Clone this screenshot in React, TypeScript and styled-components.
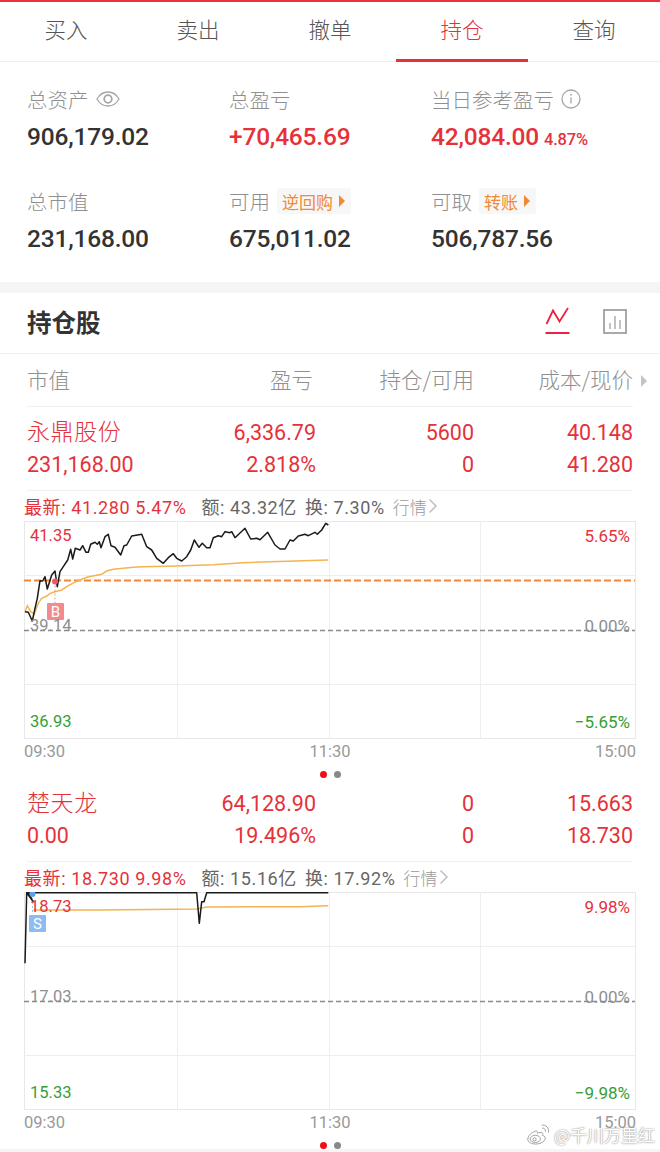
import * as React from "react";
import styled, { createGlobalStyle } from "styled-components";

const RED = "#e5323a";
const NUM_FONT = `Roboto, "Noto Sans CJK SC", sans-serif`;

const GlobalStyle = createGlobalStyle`
  html, body {
    margin: 0;
    padding: 0;
    background: #ffffff;
    overflow: hidden;
    font-family: "Noto Sans CJK SC", "Noto Sans", sans-serif;
  }
`;

const Page = styled.div`
  position: relative;
  width: 660px;
  height: 1152px;
  overflow: hidden;
  background: #ffffff;
  border-top: 2px solid #ee2f3c;
  box-sizing: border-box;
`;

const TabBar = styled.div`
  display: flex;
  height: 60px;
  box-shadow: inset 0 -1px 0 #eeeeee;
`;

const Tab = styled.div<{ $active?: boolean }>`
  flex: 1;
  display: flex;
  align-items: center;
  justify-content: center;
  padding-bottom: 4px;
  box-sizing: border-box;
  font-size: 21.5px;
  font-weight: 300;
  color: ${({ $active }) => ($active ? RED : "#555555")};
  border-bottom: 3px solid ${({ $active }) => ($active ? RED : "transparent")};
`;

const StatsGrid = styled.div`
  display: grid;
  grid-template-columns: 202px 202px 202px;
  grid-auto-rows: 102px;
  padding: 21px 0 0 27px;
  height: 220px;
  box-sizing: border-box;
`;

const Stat = styled.div`
  display: flex;
  flex-direction: column;
`;

const StatLabel = styled.div`
  display: flex;
  align-items: center;
  gap: 7px;
  height: 32px;
  font-size: 20.5px;
  font-weight: 300;
  color: #8f8f8f;
  white-space: nowrap;
`;

const StatValue = styled.div<{ $red?: boolean }>`
  display: flex;
  align-items: baseline;
  gap: 5px;
  margin-top: 7px;
  font-family: ${NUM_FONT};
  font-size: 24.5px;
  line-height: 30px;
  font-weight: 500;
  letter-spacing: -0.2px;
  color: ${({ $red }) => ($red ? RED : "#333333")};
`;

const SmallPct = styled.span`
  font-size: 16.5px;
  letter-spacing: -0.2px;
`;

const Tag = styled.span`
  display: inline-flex;
  align-items: center;
  gap: 6px;
  height: 26px;
  padding: 0 6px 0 5px;
  font-size: 17px;
  font-weight: 400;
  color: #f08a35;
  background: #f7f7f7;
  border-radius: 2px;
`;

const TagArrow = styled.i`
  width: 0;
  height: 0;
  border-left: 6px solid #f08a35;
  border-top: 6px solid transparent;
  border-bottom: 6px solid transparent;
`;

const Band = styled.div`
  height: 11px;
  background: #f5f5f5;
`;

const SectionHeader = styled.div`
  display: flex;
  align-items: center;
  height: 61px;
  padding: 0 33px 3px 27px;
  box-sizing: border-box;
  border-bottom: 1px solid #f0f0f0;
`;

const SectionTitle = styled.div`
  flex: 1;
  font-size: 24.5px;
  font-weight: 700;
  color: #333333;
`;

const HeaderIcons = styled.div`
  display: flex;
  align-items: center;
  gap: 33px;
`;

const Columns = styled.div`
  display: grid;
  grid-template-columns: 131px 158px 158px 159px;
  margin: 0 27px;
`;

const ColumnHead = styled(Columns)`
  position: relative;
  height: 53px;
  padding-bottom: 4px;
  box-sizing: border-box;
  align-items: center;
  border-bottom: 1px solid #f0f0f0;
  font-size: 21.5px;
  font-weight: 300;
  color: #8f8f8f;
`;

const HeadArrow = styled.i`
  position: absolute;
  right: -14px;
  top: 21px;
  width: 0;
  height: 0;
  border-left: 6px solid #c4c4c4;
  border-top: 6px solid transparent;
  border-bottom: 6px solid transparent;
`;

const Right = styled.div<{ $inset?: number }>`
  text-align: right;
  padding-right: ${({ $inset }) => $inset ?? 0}px;
  white-space: nowrap;
`;

const RowBlock = styled(Columns)`
  height: 84px;
  padding-top: 10px;
  box-sizing: border-box;
  border-bottom: 1px solid #f0f0f0;
  grid-auto-rows: 32px;
  color: ${RED};
`;

const StockName = styled.div`
  font-size: 23px;
  font-weight: 300;
  line-height: 27px;
  letter-spacing: 0.6px;
  white-space: nowrap;
`;

const RowValue = styled.div<{ $left?: boolean }>`
  font-family: ${NUM_FONT};
  font-size: 21.5px;
  line-height: 32px;
  text-align: ${({ $left }) => ($left ? "left" : "right")};
  white-space: nowrap;
`;

const InfoLine = styled.div`
  display: flex;
  align-items: center;
  height: 30px;
  padding-left: 24px;
  font-family: ${NUM_FONT};
  font-size: 18px;
  letter-spacing: 0.6px;
  color: #666666;
  white-space: nowrap;
`;

const InfoRed = styled.span`
  color: ${RED};
  margin-right: 15px;
`;

const InfoItem = styled.span`
  margin-right: 8px;
`;

const InfoLink = styled.span`
  display: inline-flex;
  align-items: center;
  gap: 1px;
  font-size: 17px;
  letter-spacing: 0;
  color: #999999;
  font-weight: 300;
`;

const ChartBox = styled.div`
  position: relative;
  width: 612px;
  height: 218px;
  margin-left: 24px;
`;

const ChartSvg = styled.svg`
  display: block;
`;

const PriceLabel = styled.span<{ $top: number; $color: string; $side: "left" | "right" }>`
  position: absolute;
  top: ${({ $top }) => $top}px;
  ${({ $side }) => ($side === "left" ? "left: 6px;" : "right: 6px;")}
  font-family: ${NUM_FONT};
  font-size: ${({ $side }) => ($side === "left" ? 16.5 : 17)}px;
  line-height: 20px;
  color: ${({ $color }) => $color};
`;

const TradeBadge = styled.span<{ $left: number; $top: number; $color: string }>`
  position: absolute;
  left: ${({ $left }) => $left}px;
  top: ${({ $top }) => $top}px;
  width: 17px;
  height: 17px;
  display: flex;
  align-items: center;
  justify-content: center;
  border-radius: 1px;
  font-family: ${NUM_FONT};
  font-size: 15px;
  color: #ffffff;
  background: ${({ $color }) => $color};
`;

const TimeAxis = styled.div`
  display: flex;
  justify-content: space-between;
  width: 612px;
  margin: 3px 0 0 24px;
  font-family: ${NUM_FONT};
  font-size: 16.5px;
  line-height: 20px;
  color: #999999;
`;

const Dots = styled.div`
  display: flex;
  justify-content: center;
  gap: 7px;
  height: 16px;
  padding-top: 9px;
  box-sizing: border-box;
`;

const Dot = styled.i<{ $on?: boolean }>`
  width: 7px;
  height: 7px;
  border-radius: 50%;
  background: ${({ $on }) => ($on ? "#f00f14" : "#888888")};
`;

const Watermark = styled.div`
  position: absolute;
  right: 5px;
  bottom: 5px;
  display: flex;
  align-items: center;
  gap: 4px;
  font-size: 17px;
  color: #ffffff;
  text-shadow: 0 0 1px #9a9a9a, 0 0 2px #9a9a9a;
  white-space: nowrap;
`;

const BottomBand = styled.div`
  position: absolute;
  left: 0;
  right: 0;
  bottom: 0;
  height: 3px;
  background: #f5f5f5;
`;

type Point = [number, number];

// points read off the 3x crop of the chart, shifted into chart coordinates
const toLine = (pts: Point[], dy: number) =>
  pts.map(([x, y]) => `${(x / 3 - 24).toFixed(1)},${(y / 3 + dy).toFixed(1)}`).join(" ");

const chartOnePrice: Point[] = [
  [75, 290], [85, 292], [97, 318], [105, 280], [112, 250], [120, 197], [128, 198], [135, 185], [142, 222],
  [155, 180], [165, 168], [172, 215], [180, 170], [190, 155], [203, 135], [212, 103], [218, 132], [226, 100],
  [240, 105], [248, 92], [258, 112], [265, 112], [272, 88], [285, 82], [292, 88], [298, 80], [303, 98],
  [315, 65], [325, 58], [333, 92], [345, 97], [362, 120], [372, 92], [380, 90], [395, 63], [425, 58],
  [440, 95], [455, 105], [470, 130], [490, 145], [505, 128], [520, 116], [530, 130], [545, 138], [560, 125],
  [572, 105], [583, 75], [597, 97], [607, 85], [620, 98], [630, 98], [640, 68], [655, 62], [665, 65],
  [675, 50], [690, 53], [695, 50], [705, 68], [735, 40], [752, 72], [770, 70], [780, 74], [803, 52],
  [825, 90], [840, 102], [855, 102], [870, 75], [880, 78], [895, 63], [915, 58], [925, 62], [945, 52],
  [952, 58], [965, 45], [977, 25], [985, 30],
];

const chartOneAvg: Point[] = [
  [75, 290], [82, 272], [92, 290], [103, 297], [115, 265], [125, 250], [140, 243], [150, 235], [165, 230],
  [185, 225], [205, 212], [235, 197], [260, 187], [305, 178], [320, 168], [340, 163], [400, 157], [430, 155],
  [530, 153], [640, 149], [730, 143], [985, 135],
];

const chartTwoPrice: Point[] = [
  [75, 310], [80, 98], [100, 125], [84, 98], [590, 98], [598, 190], [605, 125], [612, 125], [620, 98], [985, 98],
];

const chartTwoAvg: Point[] = [
  [100, 150], [300, 150], [590, 147], [620, 141], [900, 140], [985, 137],
];

interface ChartData {
  price: string;
  avg: string;
  refLine?: number;
  dot: { x: number; y: number; color: string; toY: number };
  badge: { left: number; top: number; color: string; text: string };
  high: string;
  mid: string;
  low: string;
  highPct: string;
  lowPct: string;
}

interface Stock {
  name: string;
  cells: string[][];
  marketValue: string;
  latest: string;
  amount: string;
  turnover: string;
  chart: ChartData;
}

const stocks: Stock[] = [
  {
    name: "永鼎股份",
    marketValue: "231,168.00",
    cells: [["6,336.79", "5600", "40.148"], ["2.818%", "0", "41.280"]],
    latest: "最新: 41.280 5.47%",
    amount: "额: 43.32亿",
    turnover: "换: 7.30%",
    chart: {
      price: toLine(chartOnePrice, -6),
      avg: toLine(chartOneAvg, -6),
      refLine: 59.5,
      dot: { x: 31, y: 60.5, color: "#ee5a5f", toY: 82 },
      badge: { left: 23, top: 82, color: "#f28a8e", text: "B" },
      high: "41.35",
      mid: "39.14",
      low: "36.93",
      highPct: "5.65%",
      lowPct: "−5.65%",
    },
  },
  {
    name: "楚天龙",
    marketValue: "0.00",
    cells: [["64,128.90", "0", "15.663"], ["19.496%", "0", "18.730"]],
    latest: "最新: 18.730 9.98%",
    amount: "额: 15.16亿",
    turnover: "换: 17.92%",
    chart: {
      price: toLine(chartTwoPrice, -32),
      avg: toLine(chartTwoAvg, -32),
      dot: { x: 8.5, y: 2, color: "#5f9fe8", toY: 22 },
      badge: { left: 5, top: 23, color: "#8cbcf0", text: "S" },
      high: "18.73",
      mid: "17.03",
      low: "15.33",
      highPct: "9.98%",
      lowPct: "−9.98%",
    },
  },
];

const EyeIcon = () => (
  <svg width="24" height="18" viewBox="0 0 24 18" fill="none" stroke="#a6a6a6" strokeWidth="1.3">
    <path d="M1 9c2.6-4.6 6.6-7 11-7s8.4 2.4 11 7c-2.6 4.6-6.600 7-11 7S3.600 13.600 1 9z" />
    <circle cx="12" cy="9" r="3.800" strokeWidth="1.800" />
  </svg>
);

const InfoIcon = () => (
  <svg width="20" height="20" viewBox="0 0 20 20" fill="none" stroke="#a6a6a6" strokeWidth="1.3">
    <circle cx="10" cy="10" r="9" />
    <path d="M10 8.500v6" />
    <path d="M10 5v1.500" strokeWidth="1.600" />
  </svg>
);

const LineIcon = () => (
  <svg width="25" height="30" viewBox="0 0 25 30" fill="none" stroke="#ee2240" strokeWidth="1.800">
    <path d="M1.500 17 8 3.500l6.500 11L23 1" />
    <path d="M0.500 26h24" strokeWidth="2" />
  </svg>
);

const BarsIcon = () => (
  <svg width="24" height="25" viewBox="0 0 24 25" fill="none" stroke="#a0a0a0">
    <rect x="1" y="1" width="22" height="23" strokeWidth="1.800" />
    <path d="M7 20v-6M12 20V7M17 20v-9" strokeWidth="1.300" />
  </svg>
);

const ChevronIcon = () => (
  <svg width="10" height="16" viewBox="0 0 10 16" fill="none" stroke="#c0c0c0" strokeWidth="1.500">
    <path d="M1.500 1.500 8 8l-6.500 6.500" />
  </svg>
);

const WeiboIcon = () => (
  <svg width="23" height="21" viewBox="0 0 29 26" fill="#ffffff" stroke="#9a9a9a" strokeWidth="1.200">
    <path d="M11 8.500C5.500 10.500 1 15 1 19c0 3.500 4.500 6 10 6 6.500 0 12-3.500 12-7.500 0-2.200-2.200-3-3.500-3.400.6-1.500.5-2.800-.5-3.400-1.600-.8-4.300 0-6 .8.400-1.800-.3-3.500-2-3z" />
    <ellipse cx="10.500" cy="18.500" rx="6.500" ry="4.500" />
    <circle cx="9.500" cy="19" r="2" />
    <path d="M19 5c2.500-.5 5 1.800 4.200 4.500M18.500 1.200c5-.8 10 3.600 8.500 9.300" fill="none" />
  </svg>
);

const Chart = ({ data }: { data: ChartData }) => (
  <ChartBox>
    <ChartSvg width="612" height="218" viewBox="0 0 612 218" fill="none">
      <rect x="0.500" y="0.500" width="611" height="217" stroke="#e8e8e8" />
      <path d="M153.500 0v217M305.500 0v217M456.500 0v217M0 54.500h611M0 163.500h611" stroke="#eeeeee" />
      <path d="M0 109.500h611" stroke="#8a8a8a" strokeWidth="1.300" strokeDasharray="5 3" />
      {data.refLine !== undefined && (
        <path d={`M0 ${data.refLine}h611`} stroke="#f0883a" strokeWidth="1.800" strokeDasharray="7 3" />
      )}
      <polyline points={data.avg} stroke="#f5b352" strokeWidth="1.500" />
      <polyline points={data.price} stroke="#1a1a1a" strokeWidth="1.500" strokeLinejoin="round" />
      <path
        d={`M${data.dot.x} ${data.dot.y}V${data.dot.toY}`}
        stroke={data.dot.color}
        strokeOpacity="0.6"
        strokeDasharray="2 2"
      />
      <circle cx={data.dot.x} cy={data.dot.y} r="3" fill={data.dot.color} />
    </ChartSvg>
    <PriceLabel $side="left" $top={5} $color={RED}>{data.high}</PriceLabel>
    <TradeBadge $left={data.badge.left} $top={data.badge.top} $color={data.badge.color}>{data.badge.text}</TradeBadge>
    <PriceLabel $side="left" $top={95} $color="#8f8f8f">{data.mid}</PriceLabel>
    <PriceLabel $side="left" $top={191} $color="#35a035">{data.low}</PriceLabel>
    <PriceLabel $side="right" $top={5} $color={RED}>{data.highPct}</PriceLabel>
    <PriceLabel $side="right" $top={95} $color="#8f8f8f">0.00%</PriceLabel>
    <PriceLabel $side="right" $top={191} $color="#35a035">{data.lowPct}</PriceLabel>
  </ChartBox>
);

const StockItem = ({ stock }: { stock: Stock }) => (
  <div>
    <RowBlock>
      <StockName>{stock.name}</StockName>
      {stock.cells[0].map((value) => (
        <RowValue key={value}>{value}</RowValue>
      ))}
      <RowValue $left>{stock.marketValue}</RowValue>
      {stock.cells[1].map((value) => (
        <RowValue key={value}>{value}</RowValue>
      ))}
    </RowBlock>
    <InfoLine>
      <InfoRed>{stock.latest}</InfoRed>
      <InfoItem>{stock.amount}</InfoItem>
      <InfoItem>{stock.turnover}</InfoItem>
      <InfoLink>
        行情
        <ChevronIcon />
      </InfoLink>
    </InfoLine>
    <Chart data={stock.chart} />
    <TimeAxis>
      <span>09:30</span>
      <span>11:30</span>
      <span>15:00</span>
    </TimeAxis>
    <Dots>
      <Dot $on />
      <Dot />
    </Dots>
  </div>
);

const App = () => {
  return (
    <Page>
      <GlobalStyle />
      <TabBar>
        <Tab>买入</Tab>
        <Tab>卖出</Tab>
        <Tab>撤单</Tab>
        <Tab $active>持仓</Tab>
        <Tab>查询</Tab>
      </TabBar>
      <StatsGrid>
        <Stat>
          <StatLabel>总资产 <EyeIcon /></StatLabel>
          <StatValue>906,179.02</StatValue>
        </Stat>
        <Stat>
          <StatLabel>总盈亏</StatLabel>
          <StatValue $red>+70,465.69</StatValue>
        </Stat>
        <Stat>
          <StatLabel>当日参考盈亏 <InfoIcon /></StatLabel>
          <StatValue $red>42,084.00 <SmallPct>4.87%</SmallPct></StatValue>
        </Stat>
        <Stat>
          <StatLabel>总市值</StatLabel>
          <StatValue>231,168.00</StatValue>
        </Stat>
        <Stat>
          <StatLabel>可用 <Tag>逆回购<TagArrow /></Tag></StatLabel>
          <StatValue>675,011.02</StatValue>
        </Stat>
        <Stat>
          <StatLabel>可取 <Tag>转账<TagArrow /></Tag></StatLabel>
          <StatValue>506,787.56</StatValue>
        </Stat>
      </StatsGrid>
      <Band />
      <SectionHeader>
        <SectionTitle>持仓股</SectionTitle>
        <HeaderIcons>
          <LineIcon />
          <BarsIcon />
        </HeaderIcons>
      </SectionHeader>
      <ColumnHead>
        <div>市值</div>
        <Right $inset={3}>盈亏</Right>
        <Right>持仓/可用</Right>
        <Right>成本/现价</Right>
        <HeadArrow />
      </ColumnHead>
      {stocks.map((stock) => (
        <StockItem key={stock.name} stock={stock} />
      ))}
      <BottomBand />
      <Watermark>
        <WeiboIcon />
        @千川万里红
      </Watermark>
    </Page>
  );
};

export default App;
